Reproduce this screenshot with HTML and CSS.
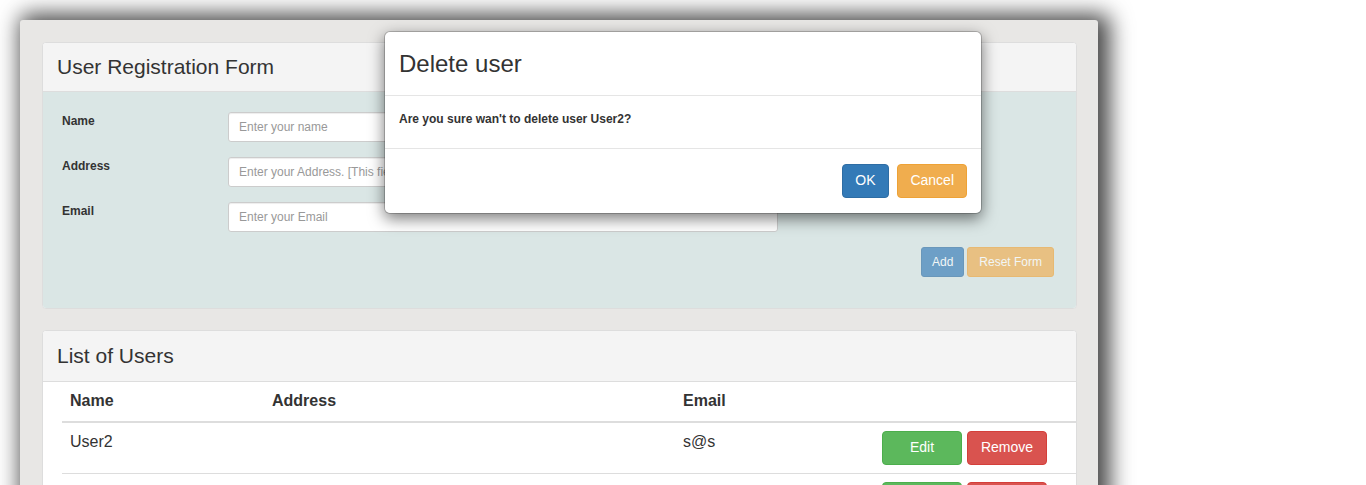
FILE: index.html
```html
<!DOCTYPE html>
<html lang="en">
<head>
<meta charset="utf-8">
<title>User Registration</title>
<link rel="stylesheet" href="styles.css">
</head>
<body>
<div class="page">
  <div class="app">
    <div class="panel">
      <div class="panel-heading"><h3 class="panel-title">User Registration Form</h3></div>
      <div class="panel-body form-body">
        <form class="form">
          <div class="form-row">
            <label class="form-label">Name</label>
            <input class="form-input" type="text" placeholder="Enter your name">
          </div>
          <div class="form-row">
            <label class="form-label">Address</label>
            <input class="form-input" type="text" placeholder="Enter your Address. [This field is validation free]">
          </div>
          <div class="form-row">
            <label class="form-label">Email</label>
            <input class="form-input" type="email" placeholder="Enter your Email">
          </div>
          <div class="form-actions">
            <button type="button" class="btn btn-sm btn-primary" disabled>Add</button>
            <button type="button" class="btn btn-sm btn-warning btn-reset" disabled>Reset Form</button>
          </div>
        </form>
      </div>
    </div>

    <div class="panel panel-list">
      <div class="panel-heading heading-list"><h3 class="panel-title">List of Users</h3></div>
      <div class="table-wrap">
        <table class="users">
          <colgroup>
            <col class="c-name"><col class="c-address"><col class="c-email"><col class="c-actions">
          </colgroup>
          <thead>
            <tr><th>Name</th><th>Address</th><th>Email</th><th></th></tr>
          </thead>
          <tbody>
            <tr>
              <td>User2</td><td></td><td>s@s</td>
              <td><button class="btn btn-success btn-wide">Edit</button><button class="btn btn-danger btn-wide">Remove</button></td>
            </tr>
            <tr>
              <td>User1</td><td></td><td>u@u</td>
              <td><button class="btn btn-success btn-wide">Edit</button><button class="btn btn-danger btn-wide">Remove</button></td>
            </tr>
          </tbody>
        </table>
      </div>
    </div>
  </div>

  <div class="modal">
    <div class="modal-header"><h4 class="modal-title">Delete user</h4></div>
    <div class="modal-body"><label class="modal-text">Are you sure wan't to delete user User2?</label></div>
    <div class="modal-footer">
      <button class="btn btn-primary">OK</button>
      <button class="btn btn-warning">Cancel</button>
    </div>
  </div>
</div>
</body>
</html>
```

FILE: styles.css
```css
* { box-sizing: border-box; }

html, body {
  margin: 0;
  padding: 0;
  height: 485px;
  overflow: hidden;
  background: #ffffff;
  font-family: "Liberation Sans", Arial, Helvetica, sans-serif;
  font-size: 14px;
  line-height: 1.42857;
  color: #333333;
}

.page {
  position: relative;
  height: 485px;
  padding: 20px 0 0 20px;
}

.app {
  width: 1078px;
  height: 700px;
  padding: 22px 21px 0 22px;
  background: #e8e7e5;
  border-radius: 3px 3px 0 0;
  box-shadow: 6px 0 22px 6px rgba(0, 0, 0, 0.72);
}

.panel {
  background: #ffffff;
  border: 1px solid #dddddd;
  border-radius: 4px;
  margin-bottom: 21px;
  overflow: hidden;
}

.panel-heading {
  background: #f4f4f4;
  border-bottom: 1px solid #dddddd;
  padding: 12px 15px 12px 14px;
}

.heading-list {
  padding-top: 13px;
  padding-bottom: 13px;
}

.panel-title {
  margin: 0;
  font-size: 21px;
  font-weight: normal;
  line-height: 24px;
  color: #333333;
}

.form-body {
  background: #dae6e5;
  padding: 20px 20px 31px 19px;
}

.form {
  display: flex;
  flex-direction: column;
  gap: 15px;
}

.form-row {
  display: flex;
  align-items: flex-start;
}

.form-label {
  width: 166px;
  font-size: 12px;
  font-weight: bold;
  line-height: 17px;
  padding-top: 1px;
}

.form-input {
  width: 550px;
  height: 30px;
  padding: 5px 10px;
  font-family: inherit;
  font-size: 12px;
  line-height: 1.5;
  color: #555555;
  background: #ffffff;
  border: 1px solid #cccccc;
  border-radius: 3px;
  box-shadow: inset 0 1px 1px rgba(0, 0, 0, 0.075);
  outline: none;
}

.form-input::placeholder { color: #999999; }

.form-actions {
  display: flex;
  justify-content: flex-end;
  gap: 3px;
  padding-right: 2px;
}

.btn {
  display: inline-block;
  padding: 6px 12px;
  font-family: inherit;
  font-size: 14px;
  line-height: 1.42857;
  color: #ffffff;
  border: 1px solid transparent;
  border-radius: 4px;
  cursor: pointer;
  text-align: center;
}

.btn-sm {
  padding: 5px 10px;
  font-size: 12px;
  line-height: 1.5;
  border-radius: 3px;
}

.btn-reset { padding-left: 11px; padding-right: 11px; }

.btn[disabled] { opacity: 0.65; cursor: not-allowed; }

.btn-primary { background: #337ab7; border-color: #2e6da4; }
.btn-warning { background: #f0ad4e; border-color: #eea236; }
.btn-success { background: #5cb85c; border-color: #4cae4c; }
.btn-danger  { background: #d9534f; border-color: #d43f3a; }

.btn-wide { width: 80px; }
.btn-wide + .btn-wide { margin-left: 5px; }

.table-wrap {
  padding-left: 19px;
}

.users {
  width: 1016px;
  border-collapse: collapse;
  table-layout: fixed;
  font-size: 16px;
}

.c-name { width: 202px; }
.c-address { width: 411px; }
.c-email { width: 199px; }
.c-actions { width: 204px; }

.users th,
.users td {
  padding: 8px;
  line-height: 1.42857;
  text-align: left;
  vertical-align: top;
}

.users th {
  font-weight: bold;
  border-bottom: 2px solid #dddddd;
}

.users td {
  border-top: 1px solid #dddddd;
  white-space: nowrap;
}

.users tbody tr:first-child td { border-top: 0; }

.modal {
  position: absolute;
  left: 384px;
  top: 31px;
  width: 598px;
  background: #ffffff;
  border: 1px solid rgba(0, 0, 0, 0.2);
  border-radius: 6px;
  background-clip: padding-box;
  box-shadow: 0 5px 15px rgba(0, 0, 0, 0.5);
}

.modal-header {
  padding: 15px 15px 14px 14px;
  border-bottom: 1px solid #e5e5e5;
}

.modal-title {
  margin: 0;
  font-size: 24px;
  font-weight: normal;
  line-height: 1.42857;
  color: #333333;
}

.modal-body {
  padding: 15px 15px 15px 14px;
}

.modal-text {
  display: block;
  margin-bottom: 5px;
  font-size: 12px;
  font-weight: bold;
  line-height: 17px;
}

.modal-footer {
  padding: 15px 14px 15px 15px;
  text-align: right;
  border-top: 1px solid #e5e5e5;
}

.modal-footer .btn + .btn { margin-left: 5px; }
```
